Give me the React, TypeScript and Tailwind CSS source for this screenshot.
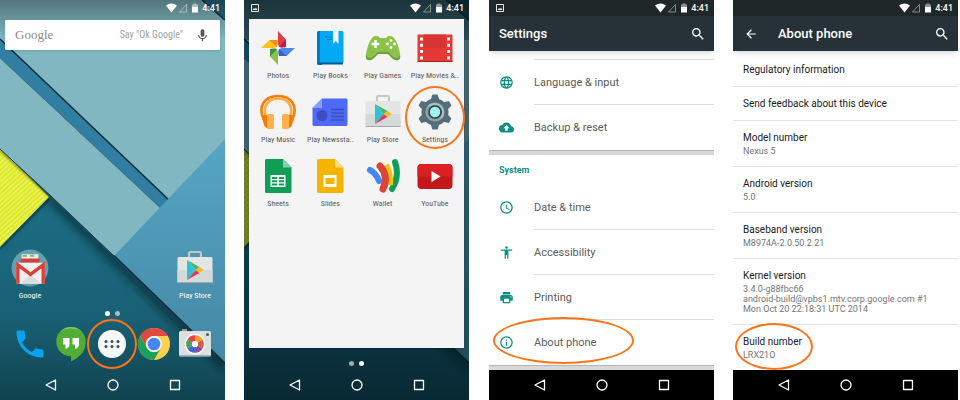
import React from "react";
import {
  MdAccessTime,
  MdAccessibility,
  MdArrowBack,
  MdBackup,
  MdInfoOutline,
  MdLanguage,
  MdMic,
  MdPhone,
  MdPrint,
  MdSearch,
} from "react-icons/md";

type IconProps = { className?: string };

/* ---------- Wallpaper ---------- */

function Wallpaper({ id, dim = false }: { id: string; dim?: boolean }) {
  return (
    <svg className="absolute inset-0 h-full w-full" viewBox="0 0 225 400" preserveAspectRatio="none" aria-hidden="true">
      <defs>
        <linearGradient id={`${id}-base`} x1="0" y1="0" x2="0" y2="1">
          <stop offset="0" stopColor="#1d7188" />
          <stop offset="0.55" stopColor="#1b6b81" />
          <stop offset="0.8" stopColor="#1a5f74" />
          <stop offset="1" stopColor="#10434f" />
        </linearGradient>
        <linearGradient id={`${id}-blue`} x1="0" y1="0" x2="0" y2="1">
          <stop offset="0" stopColor="#56a5c5" />
          <stop offset="1" stopColor="#4488a4" />
        </linearGradient>
        <linearGradient id={`${id}-top`} x1="0" y1="0" x2="0" y2="1">
          <stop offset="0" stopColor="#000" stopOpacity="0.36" />
          <stop offset="1" stopColor="#000" stopOpacity="0" />
        </linearGradient>
        <pattern id={`${id}-ridges`} width="4" height="3.500" patternUnits="userSpaceOnUse" patternTransform="rotate(-42)">
          <rect width="4" height="4" fill="#e9f440" />
          <rect width="4" height="1" fill="#d2dc3a" />
        </pattern>
        <filter id={`${id}-soft`} x="-20%" y="-20%" width="140%" height="140%">
          <feGaussianBlur stdDeviation="4" />
        </filter>
        <filter id={`${id}-tight`} x="-20%" y="-20%" width="140%" height="140%">
          <feGaussianBlur stdDeviation="1" />
        </filter>
      </defs>
      <rect width="225" height="400" fill={`url(#${id}-base)`} />
      <path d="M50 198 225 367" stroke="#00131c" strokeWidth="8" opacity="0.6" filter={`url(#${id}-soft)`} />
      <path d="M0 248 50 198" stroke="#00131c" strokeWidth="2" opacity="0.7" filter={`url(#${id}-tight)`} />
      <path d="M0 148 49 197 0 247Z" fill={`url(#${id}-ridges)`} />
      <path d="M0 150 52 198" stroke="#3a4a10" strokeWidth="3" opacity="0.5" filter={`url(#${id}-tight)`} />
      <path d="M0 0H225V363L114 256 52 197 0 149Z" fill="#80b7c0" />
      <path d="M0 149 52 197 114 256" fill="none" stroke="#193f46" strokeWidth="1" />
      <path d="M0 39 170 201 162 210 0 58Z" fill="#317ea3" />
      <path d="M0 39 170 201" stroke="#0b2c3b" strokeWidth="1.6" />
      <path d="M0 58 162 209" stroke="#3f7080" strokeWidth="0.8" />
      <path d="M225 139 114 256 225 363Z" fill={`url(#${id}-blue)`} />
      <path d="M114 255.500 225 363" stroke="#0c2c3a" strokeWidth="1.4" />
      <path d="M203 0H225V19Z" fill="#2a6d85" />
      <path d="M202 0 225 20" stroke="#0c2c3a" strokeWidth="1.6" />
      <rect width="225" height="40" fill={`url(#${id}-top)`} />
      {dim && <rect width="225" height="400" fill="#001018" opacity="0.5" />}
      {dim && <rect width="225" height="40" fill="#00141c" opacity="0.3" />}
    </svg>
  );
}

/* ---------- Launcher icons (36 x 36 grid) ---------- */

function Art({ children, className = "size-9" }: { children: React.ReactNode; className?: string }) {
  return (
    <svg className={className} viewBox="0 0 36 36" aria-hidden="true">
      {children}
    </svg>
  );
}

const blades = [
  { turn: "rotate(0)", light: "#e0403a", dark: "#c2185b" },
  { turn: "rotate(90)", light: "#4f86ec", dark: "#3563c4" },
  { turn: "rotate(180)", light: "#8bc34a", dark: "#3d9140" },
  { turn: "rotate(270)", light: "#fcc21b", dark: "#f08a24" },
];

const Photos = () => (
  <Art>
    <g transform="translate(18 18)">
      {blades.map(({ turn, light, dark }) => (
        <g key={turn} transform={turn}>
          <path d="M0-17 8-8.500V-1L0 0Z" fill={light} />
          <path d="M8-8.500V-1L0 0Z" fill={dark} />
        </g>
      ))}
      <path d="m0-4 1 3 3 1-3 1-1 3-1-3-3-1 3-1Z" fill="#fff" />
    </g>
  </Art>
);

const Books = () => (
  <Art>
    <path d="M5 2.500Q5 1 6.500 1H10v34H6.500Q5 35 5 33.500Z" fill="#0277bd" />
    <path d="M8 1h22q1.500 0 1.500 1.500v29q0 1.500-1.500 1.500H8Z" fill="#03a9f4" />
    <path d="M6.500 32.500H31v2H6.500Z" fill="#01579b" />
    <path d="M21 1h5.500v13l-2.750-3L21 14Z" fill="#f5f5f5" />
    <path d="M13 7h6.500M15 9.500h4.500" stroke="#0277bd" strokeWidth="1.200" />
  </Art>
);

const Games = () => (
  <Art>
    <path d="M7 8q1-2 4-2h2l2 2h6l2-2h2q3 0 4 2 4 5 6 16 1 7-4 6-2 0-4-2l-4-4H13l-4 4q-2 2-4 2-5 1-4-6Q3 13 7 8Z" fill="#8bc34a" />
    <path d="M1 24q0 4 4 4 2 0 4-2l4-4h10l4 4q2 2 4 2 4 0 4-4 1 7-4 6-2 0-4-2l-4-4H13l-4 4q-2 2-4 2-5 1-4-6Z" fill="#689f38" />
    <path d="M10.500 10v8M6.500 14h8" stroke="#fff" strokeWidth="2.500" />
    <g fill="#fff">
      <circle cx="26" cy="10.500" r="1.400" />
      <circle cx="26" cy="17.500" r="1.400" />
      <circle cx="22.500" cy="14" r="1.400" />
      <circle cx="29.500" cy="14" r="1.400" />
    </g>
  </Art>
);

const Movies = () => (
  <Art>
    <rect x="0.500" y="4.500" width="35" height="27.500" rx="1" fill="#e53935" />
    <path d="M7 4.500h22V18H7Z" fill="#d83431" />
    <path d="M.500 31.500h35" stroke="#b71c1c" strokeWidth="1" />
    <path d="M4.500 7.500v23M31.500 7.500v23" stroke="#fff" strokeWidth="3" strokeDasharray="3 3.300" />
  </Art>
);

const Music = () => (
  <Art>
    <path d="M4 26C-3 12 5 2 18 2s21 10 14 24" fill="none" stroke="#ef7d10" strokeWidth="2.600" />
    <path d="M6 24C2 12 8 4.500 18 4.500S34 12 30 24" fill="none" stroke="#ffab40" strokeWidth="2.600" />
    <path d="M2 23q0-2 3-2h4v13H7q-2 0-3-3Z" fill="#f57c00" />
    <path d="M34 23q0-2-3-2h-4v13h2q2 0 3-3Z" fill="#f57c00" />
    <rect x="7" y="20" width="7" height="15" rx="1.500" fill="#ffb04d" />
    <rect x="22" y="20" width="7" height="15" rx="1.500" fill="#ffb04d" />
  </Art>
);

const Newsstand = () => (
  <Art>
    <path d="M10 4.500h24q1.500 0 1.500 1.500v24.500q0 1.500-1.500 1.500H2q-1.500 0-1.500-1.500V14Z" fill="#4d69f6" />
    <path d="M10 4.500V14H.500Z" fill="#8c9eff" />
    <circle cx="10" cy="21.500" r="5.500" fill="#3a4fbd" />
    <path d="M19 15.500h13M19 19h13M19 22.500h13M19 26h13" stroke="#3a4fbd" strokeWidth="1.500" />
  </Art>
);

const PlayStore = () => (
  <Art>
    <path d="M12 7V3.500Q12 2 13.500 2h9Q24 2 24 3.500V7" fill="none" stroke="#c3c7c8" strokeWidth="2.200" />
    <rect x="0.500" y="7" width="35" height="26" rx="1.500" fill="#e4e6e6" />
    <path d="M.500 20h35v11.500q0 1.500-1.500 1.500H2q-1.500 0-1.500-1.500Z" fill="#d6d9da" />
    <path d="M.500 32.500h35" stroke="#a7aaac" />
    <path d="m10 10 9 10-9 10Z" fill="#30c3d6" />
    <path d="m10 10 12.500 7-3.500 3Z" fill="#4fb36b" />
    <path d="m10 30 9-10 3.500 3Z" fill="#e33b57" />
    <path d="m22.500 17 4.500 3-4.500 3-3.500-3Z" fill="#f7b928" />
  </Art>
);

const Gear = () => (
  <Art>
    <g fill="#546e7a">
      <circle cx="18" cy="18" r="13.500" />
      <path id="tooth" d="M15 1.500q.200-1 1-1h4q.800 0 1 1L22.500 7h-9ZM15 34.500q.200 1 1 1h4q.800 0 1-1L22.500 29h-9Z" />
      <path d="M15 1.500q.200-1 1-1h4q.800 0 1 1L22.500 7h-9ZM15 34.500q.200 1 1 1h4q.800 0 1-1L22.500 29h-9Z" transform="rotate(60 18 18)" />
      <path d="M15 1.500q.200-1 1-1h4q.800 0 1 1L22.500 7h-9ZM15 34.500q.200 1 1 1h4q.800 0 1-1L22.500 29h-9Z" transform="rotate(-60 18 18)" />
    </g>
    <circle cx="18" cy="18" r="9.500" fill="#90a4ae" />
    <path d="M11.300 11.300a9.500 9.500 0 0 1 13.400 13.400Z" fill="#b0bec5" />
    <circle cx="18" cy="18" r="7" fill="#37474f" />
    <circle cx="18" cy="18" r="5.200" fill="#9df5ec" />
  </Art>
);

const DocBase = ({ color, fold }: { color: string; fold: string }) => (
  <>
    <path d="M6.500 1H23l8.500 8.500v24q0 1.500-1.500 1.500H6.500Q5 35 5 33.500v-31Q5 1 6.500 1Z" fill={color} />
    <path d="m23 1 8.500 8.500H23Z" fill={fold} />
  </>
);

const Sheets = () => (
  <Art>
    <DocBase color="#0f9d58" fold="#87ceac" />
    <path d="M10.500 17h15v12h-15Z" fill="#fff" />
    <path d="M12 20h12M12 23.200h12M12 26.500h12" stroke="#0f9d58" strokeWidth="2" />
    <path d="M18 18v10" stroke="#fff" strokeWidth="1.500" />
  </Art>
);

const Slides = () => (
  <Art>
    <DocBase color="#f4b400" fold="#fada80" />
    <path d="M11.500 17h13v12h-13Z" fill="#fff" />
    <path d="M13.500 20h9v6h-9Z" fill="#f4b400" />
  </Art>
);

const Wallet = () => (
  <Art>
    <g fill="none" strokeLinecap="round" strokeWidth="6">
      <path d="M30 4q5 14-3 27" stroke="#0f9d58" />
      <path d="M21 7q5 8 4 20" stroke="#f4c20d" strokeLinecap="butt" />
      <path d="M5 12q6 3 9 11" stroke="#4285f4" />
      <path d="M15 8q9 10 3 23" stroke="#db4437" strokeWidth="7" />
    </g>
  </Art>
);

const YouTube = () => (
  <Art>
    <rect x="0.500" y="6" width="35" height="25" rx="4" fill="#c4171c" />
    <path d="M.500 18.500V10q0-4 4-4h27q4 0 4 4v8.500Z" fill="#d92025" />
    <path d="m14.500 13 9 5.500-9 5.500Z" fill="#fff" />
  </Art>
);

const GoogleFolder = () => (
  <Art className="size-[38px]">
    <circle cx="18" cy="18" r="17.500" fill="#7db1c0" opacity="0.75" />
    <path d="M10 5h16v5H10Z" fill="#e8efe6" />
    <path d="M11 6.500h14" stroke="#7cb86c" strokeWidth="1.500" strokeDasharray="4 3" />
    <path d="M9 9h18v4H9Z" fill="#d8403a" />
    <path d="M5 14q0-1 1-1h25q1 0 1 1v18q0 1-1 1H6q-1 0-1-1Z" fill="#f1f1f1" />
    <path d="m8 33 10.500-9L29 33Z" fill="#dcdcdc" />
    <path d="M6.500 33V15L18.500 24l12-9v18" fill="none" stroke="#dd3f34" strokeWidth="3.200" />
  </Art>
);

const Hangouts = () => (
  <Art>
    <path d="M18 1a14.700 14.700 0 0 0 0 29.400V35.500q14.700-7 14.700-19.500A14.700 14.700 0 0 0 18 1Z" fill="#4fae33" />
    <path d="M18 1a14.700 14.700 0 0 0-14.700 15Q4 2.500 18 2.500T32.700 16A14.700 14.700 0 0 0 18 1Z" fill="#86cd6b" />
    <path d="M10 12h6.500v6q0 4-4 5v-4.500H10ZM19.500 12H26v6q0 4-4 5v-4.500h-2.500Z" fill="#fff" />
  </Art>
);

const Apps = () => (
  <Art>
    <circle cx="18" cy="18" r="14" fill="#f6f7f7" />
    <g fill="#31505b">
      {[15.500, 20.500].map((y) => [12, 18, 24].map((x) => <circle key={`${x}-${y}`} cx={x} cy={y} r="1.500" />))}
    </g>
  </Art>
);

const Chrome = () => (
  <Art>
    <circle cx="18" cy="18" r="16" fill="#fcd04c" />
    <path d="M4.100 10A16 16 0 0 1 31.900 10H18a8 8 0 0 0-7 12Z" fill="#de4a3e" />
    <path d="M4.100 10A16 16 0 0 0 18 34l7-12a8 8 0 0 1-14 0Z" fill="#1b9f5c" />
    <circle cx="18" cy="18" r="8" fill="#f5f5f5" />
    <circle cx="18" cy="18" r="6.300" fill="#4386f0" />
  </Art>
);

const Camera = () => (
  <Art>
    <path d="M5 3h5v3H5Z" fill="#8a9ba3" />
    <rect x="2" y="5" width="32" height="25.500" rx="1.500" fill="#dcdfe0" />
    <path d="M2 29.500h32" stroke="#a9b0b3" />
    <circle cx="30.500" cy="8.500" r="1.500" fill="#455a64" />
    <circle cx="18" cy="18" r="10.500" fill="#fafafa" />
    <g fill="none" strokeWidth="5.500">
      <path d="M18 12a6 6 0 0 1 5.200 3" stroke="#f29a31" />
      <path d="M23.200 15a6 6 0 0 1 0 6" stroke="#d95b37" />
      <path d="M23.200 21a6 6 0 0 1-5.200 3" stroke="#8d4aa5" />
      <path d="M18 24a6 6 0 0 1-5.200-3" stroke="#4066cf" />
      <path d="M12.800 21a6 6 0 0 1 0-6" stroke="#3fa25a" />
      <path d="M12.800 15a6 6 0 0 1 5.200-3" stroke="#e4463b" />
    </g>
    <circle cx="18" cy="18" r="3" fill="#fff" />
  </Art>
);

/* ---------- System chrome ---------- */

const PictureIcon = ({ className = "" }: IconProps) => (
  <svg className={className} viewBox="0 0 8 8" aria-hidden="true">
    <path d="M.500.500h7v7h-7Z" fill="none" stroke="#e6eaeb" />
    <path d="m1.500 6 1.500-2 1 1 1-1.500 1.500 2.500Z" fill="#e6eaeb" />
  </svg>
);

function StatusBar({ picture = false, className = "" }: { picture?: boolean; className?: string }) {
  return (
    <div className={`relative flex h-4 items-center pr-[5px] pl-[7px] text-white ${className}`}>
      {picture && <PictureIcon className="size-2" />}
      <div className="ml-auto flex items-center">
        <svg className="h-2.5 w-8" viewBox="0 0 32 10" aria-hidden="true">
          <path d="M0 2.500q5.500-4 11 0L5.500 9.500Z" fill="#fff" />
          <path d="M20.500 1.500v7.500h-7Z" fill="none" stroke="#fff" strokeOpacity="0.450" />
          <path d="M26 1.500h1.500V.500h3v1H32V4h-6Z" fill="#fff" fillOpacity="0.500" />
          <path d="M26 4h6v5.500h-6Z" fill="#fff" />
        </svg>
        <span className="ml-1 text-[9px] leading-4 font-medium">4:41</span>
      </div>
    </div>
  );
}

function NavBar({ className = "" }: IconProps) {
  const button = "flex size-3 items-center justify-center";
  return (
    <nav className={`relative flex h-[30px] shrink-0 items-center justify-center gap-[50px] ${className}`}>
      <button className={button} aria-label="Back">
        <svg className="size-3" viewBox="0 0 12 12" fill="none" stroke="#fff" strokeWidth="1.300" strokeLinejoin="round">
          <path d="M10.500 1v10L1 6Z" />
        </svg>
      </button>
      <button className={button} aria-label="Home">
        <svg className="size-3" viewBox="0 0 12 12" fill="none" stroke="#fff" strokeWidth="1.300">
          <circle cx="6" cy="6" r="5" />
        </svg>
      </button>
      <button className={button} aria-label="Recent apps">
        <svg className="size-3" viewBox="0 0 12 12" fill="none" stroke="#fff" strokeWidth="1.300" strokeLinejoin="round">
          <path d="M1.500 1.500h9v9h-9Z" />
        </svg>
      </button>
    </nav>
  );
}

function PageDots({ active }: { active: 0 | 1 }) {
  return (
    <div className="relative flex justify-center gap-[5px]">
      <span className={`size-[5px] rounded-full ${active === 0 ? "bg-white" : "bg-white/60"}`} />
      <span className={`size-[5px] rounded-full ${active === 1 ? "bg-white" : "bg-white/60"}`} />
    </div>
  );
}

function Ring({ className }: { className: string }) {
  return <span className={`pointer-events-none absolute rounded-[50%] border-2 border-[#f9751a] ${className}`} />;
}

const condensed = "font-['Roboto_Condensed','Liberation_Sans_Narrow',Roboto,sans-serif]";

/* ---------- Screens ---------- */

function Shortcut({ icon, label }: { icon: React.ReactNode; label: string }) {
  return (
    <button className={`flex w-[42px] flex-col items-center gap-1 text-[8px] leading-[10px] whitespace-nowrap text-white ${condensed}`}>
      <span className="flex h-[38px] items-center">{icon}</span>
      {label}
    </button>
  );
}

function HomeScreen() {
  return (
    <section className="relative flex min-w-0 flex-1 flex-col overflow-hidden">
      <Wallpaper id="home" />
      <StatusBar />
      <div className="relative mx-[5px] mt-1 flex h-[30px] items-center rounded-[1px] bg-white pr-2.5 pl-2.5 shadow-sm">
        <span className="font-['Liberation_Serif',serif] text-[13px] leading-5 text-[#8a8a8a]">Google</span>
        <input
          type="text"
          aria-label="Search"
          placeholder='Say "Ok Google"'
          className={`min-w-0 flex-1 bg-transparent pr-3 text-right text-[10px] leading-4 outline-none placeholder:text-[#a3a3a3] ${condensed}`}
        />
        <button aria-label="Voice search">
          <MdMic className="size-[15px] text-[#555]" />
        </button>
      </div>
      <div className="relative mt-auto flex justify-between px-[9px]">
        <Shortcut icon={<GoogleFolder />} label="Google" />
        <Shortcut icon={<PlayStore />} label="Play Store" />
      </div>
      <div className="my-2.5">
        <PageDots active={0} />
      </div>
      <div className="relative mb-2 grid grid-cols-5 justify-items-center px-[9px]">
        <button aria-label="Phone" className="flex size-9 items-center justify-center">
          <MdPhone className="size-9 text-[#0aa2ef]" />
        </button>
        <button aria-label="Hangouts">
          <Hangouts />
        </button>
        <button aria-label="Apps" className="relative">
          <Apps />
          <Ring className="-inset-[7px]" />
        </button>
        <button aria-label="Chrome">
          <Chrome />
        </button>
        <button aria-label="Camera">
          <Camera />
        </button>
      </div>
      <NavBar />
    </section>
  );
}

const drawerApps = [
  { label: "Photos", Icon: Photos },
  { label: "Play Books", Icon: Books },
  { label: "Play Games", Icon: Games },
  { label: "Play Movies &..", Icon: Movies },
  { label: "Play Music", Icon: Music },
  { label: "Play Newssta..", Icon: Newsstand },
  { label: "Play Store", Icon: PlayStore },
  { label: "Settings", Icon: Gear, ring: true },
  { label: "Sheets", Icon: Sheets },
  { label: "Slides", Icon: Slides },
  { label: "Wallet", Icon: Wallet },
  { label: "YouTube", Icon: YouTube },
];

function DrawerScreen() {
  return (
    <section className="relative flex min-w-0 flex-1 flex-col overflow-hidden">
      <Wallpaper id="drawer" dim />
      <StatusBar picture />
      <div className="relative mx-[5px] mt-[3px] grid flex-1 grid-cols-4 content-start gap-y-[13px] bg-[#f4f4f4] px-[3px] pt-[11px] shadow">
        {drawerApps.map(({ label, Icon, ring }) => (
          <button
            key={label}
            className={`relative flex min-w-0 flex-col items-center gap-[5px] text-[8px] leading-[10px] whitespace-nowrap text-[#5a5a5a] ${condensed}`}
          >
            <Icon />
            {label}
            {ring && <Ring className="-inset-x-1 -top-2 -bottom-1" />}
          </button>
        ))}
      </div>
      <div className="mt-[13px] mb-1">
        <PageDots active={1} />
      </div>
      <NavBar />
    </section>
  );
}

function AppBar({ title, back = false }: { title: string; back?: boolean }) {
  return (
    <header className="relative flex h-[35px] shrink-0 items-center bg-[#263238] pr-2 pl-2.5 text-white shadow-md">
      {back && (
        <button aria-label="Back" className="mr-5 ml-px">
          <MdArrowBack className="size-3.5" />
        </button>
      )}
      <h1 className="text-[13px] leading-4 font-medium">{title}</h1>
      <button aria-label="Search" className="ml-auto">
        <MdSearch className="size-4" />
      </button>
    </header>
  );
}

function SettingsRow({ Icon, label, last = false, ring = false }: { Icon: React.ComponentType<IconProps>; label: string; last?: boolean; ring?: boolean }) {
  return (
    <li className="relative">
      <button className="flex h-[45px] w-full items-center pl-2.5 text-left">
        <span className="flex w-[35px] shrink-0">
          <Icon className="size-[15px] text-[#0b8f80]" />
        </span>
        <span className={`flex h-full flex-1 items-center border-b pt-px text-[11px] leading-4 text-[#5c5c5c] ${last ? "border-transparent" : "border-[#dedede]"}`}>
          {label}
        </span>
      </button>
      {ring && <Ring className="-top-[3px] left-1 h-[47px] w-[141px]" />}
    </li>
  );
}

const Band = () => <div className="h-[5px] border-t border-[#b5b5b5] bg-[#d8d8d8]" />;

function SettingsScreen() {
  return (
    <section className="flex min-w-0 flex-1 flex-col overflow-hidden bg-white">
      <StatusBar picture className="bg-[#202729]" />
      <AppBar title="Settings" />
      <div className="ml-[45px] h-[9px] border-b border-[#dedede]" />
      <ul>
        <SettingsRow Icon={MdLanguage} label="Language & input" />
        <SettingsRow Icon={MdBackup} label="Backup & reset" last />
      </ul>
      <Band />
      <h2 className="h-[30px] pl-2.5 text-[9px] leading-[30px] font-bold text-[#0b8f80]">System</h2>
      <ul>
        <SettingsRow Icon={MdAccessTime} label="Date & time" />
        <SettingsRow Icon={MdAccessibility} label="Accessibility" />
        <SettingsRow Icon={MdPrint} label="Printing" />
        <SettingsRow Icon={MdInfoOutline} label="About phone" last ring />
      </ul>
      <Band />
      <NavBar className="mt-auto bg-black" />
    </section>
  );
}

const phoneDetails = [
  { title: "Regulatory information", lines: [] },
  { title: "Send feedback about this device", lines: [] },
  { title: "Model number", lines: ["Nexus 5"] },
  { title: "Android version", lines: ["5.0"] },
  { title: "Baseband version", lines: ["M8974A-2.0.50.2.21"] },
  { title: "Kernel version", lines: ["3.4.0-g88fbc66", "android-build@vpbs1.mtv.corp.google.com #1", "Mon Oct 20 22:18:31 UTC 2014"] },
  { title: "Build number", lines: ["LRX21O"], ring: true },
];

function AboutScreen() {
  return (
    <section className="flex min-w-0 flex-1 flex-col overflow-hidden bg-white">
      <StatusBar className="bg-[#202729]" />
      <AppBar title="About phone" back />
      <ul className="divide-y divide-[#e2e2e2] pt-0.5">
        {phoneDetails.map(({ title, lines, ring }) => (
          <li key={title} className={`relative px-2.5 pt-[9px] ${lines.length ? "pb-2.5" : "pb-2"}`}>
            <h2 className="text-[10px] leading-4 text-[#1a1a1a]">{title}</h2>
            {lines.map((line) => (
              <p key={line} className="text-[9px] leading-[10px] whitespace-nowrap text-[#757575]">
                {line}
              </p>
            ))}
            {ring && <Ring className="-top-0.5 left-0.5 h-[47px] w-[78px]" />}
          </li>
        ))}
      </ul>
      <NavBar className="mt-auto bg-black" />
    </section>
  );
}

export default function App() {
  return (
    <main className="flex min-h-screen gap-5 bg-white pr-0.5 font-[Roboto,sans-serif]">
      <div className="flex flex-1 gap-[19px]">
        <HomeScreen />
        <DrawerScreen />
      </div>
      <div className="flex flex-1 gap-[19px]">
        <SettingsScreen />
        <AboutScreen />
      </div>
    </main>
  );
}
